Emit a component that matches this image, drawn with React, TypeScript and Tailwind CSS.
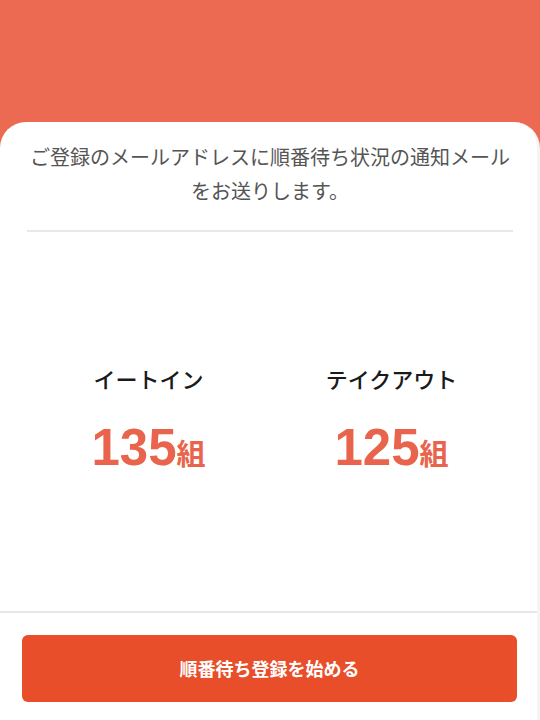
export default function App() {
  const counts = [
    { label: 'イートイン', value: 135 },
    { label: 'テイクアウト', value: 125 },
  ]

  return (
    <div
      className="w-[540px] h-[720px] bg-[#ec6a52] flex flex-col overflow-hidden"
      style={{ fontFamily: '"Noto Sans CJK JP", "Noto Sans", sans-serif' }}
    >
      <div className="h-[122px] shrink-0" />

      <div className="flex-1 bg-white rounded-t-[26px] flex flex-col border-r-[3px] border-[#f4f4f4]">
        <div className="pl-[27px] pr-[24px]">
          <p className="pt-[18px] pb-[22px] text-center text-[20px] leading-[34px] text-[#555555]">
            ご登録のメールアドレスに順番待ち状況の通知メール
            <br />
            をお送りします。
          </p>
          <div className="h-[2px] bg-[#e8e8e8]" />
        </div>

        <div className="flex-1 pl-[27px] pr-[24px] grid grid-cols-2 content-center">
          {counts.map((c) => (
            <div key={c.label} className="flex flex-col items-center">
              <span className="text-[22px] leading-[30px] font-medium text-[#1a1a1a]">{c.label}</span>
              <span className="mt-[27px] text-[#e9644c] font-bold leading-[56px] flex items-baseline">
                <span
                  className="text-[51px]"
                  style={{ fontFamily: '"Liberation Sans", Arial, sans-serif' }}
                >
                  {c.value}
                </span>
                <span className="text-[29px]">組</span>
              </span>
            </div>
          ))}
        </div>

        <div className="h-[2px] bg-[#e6e6e6]" />
        <div className="pl-[22px] pr-[20px] pt-[22px] pb-[18px]">
          <button className="w-full h-[67px] rounded-[6px] bg-[#e84e2a] text-white text-[18px] font-bold">
            順番待ち登録を始める
          </button>
        </div>
      </div>
    </div>
  )
}
